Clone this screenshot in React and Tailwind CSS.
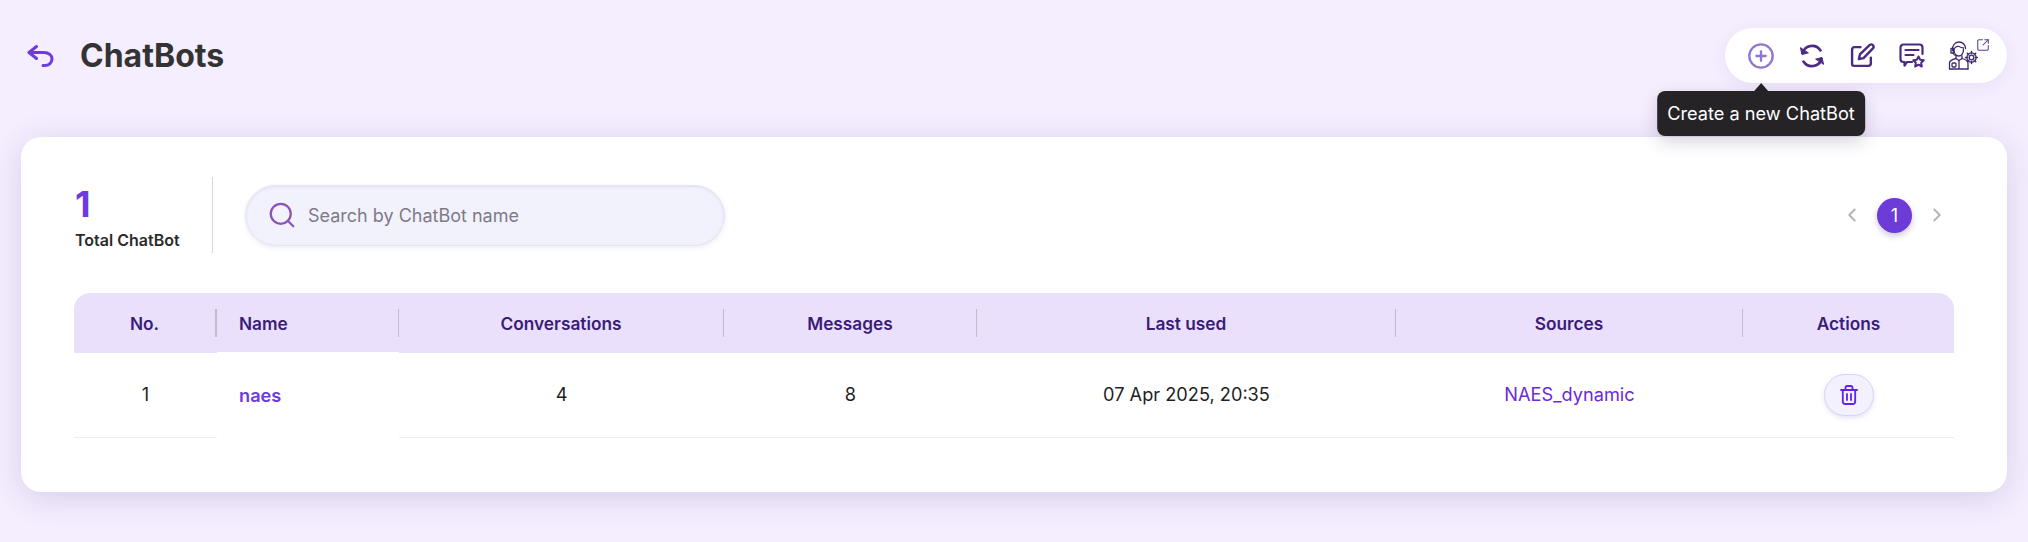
import React from 'react';
import { ChevronLeft, ChevronRight, CirclePlus, Search, SquareArrowOutUpRight } from 'lucide-react';

const columns = [
    { label: 'No.', width: 'w-[143px]' },
    { label: 'Name', width: 'w-[182px]', left: true },
    { label: 'Conversations', width: 'w-[325px]' },
    { label: 'Messages', width: 'w-[253px]' },
    { label: 'Last used', width: 'w-[419px]' },
    { label: 'Sources', width: 'w-[347px]' },
    { label: 'Actions', width: 'w-[211px]', last: true },
];

const BackIcon = () => (
    <svg width="28" height="24" viewBox="0 0 28 24" fill="none" stroke="#6d3be0" strokeWidth="3" strokeLinecap="round" strokeLinejoin="round">
        <path d="M9.500 2.500 2 8.500l7.500 6" />
        <path d="M2.500 8.500h14.500a8 6.200 0 0 1 8 6.500 7 6.500 0 0 1-7.500 6.500h-1.500" />
    </svg>
);

const RefreshIcon = () => (
    <svg width="26" height="24" viewBox="0 0 26 24" fill="none" stroke="#4b2a85" strokeWidth="2.600" strokeLinecap="round">
        <path d="M3.500 9a10 10 0 0 1 18-2.500" />
        <path d="M22.500 15a10 10 0 0 1-18 2.500" />
        <path d="M1.500 4 3 10.500l6-1.500z" fill="#4b2a85" strokeWidth="1" strokeLinejoin="round" />
        <path d="M24.500 20 23 13.500l-6 1.500z" fill="#4b2a85" strokeWidth="1" strokeLinejoin="round" />
    </svg>
);

const EditIcon = () => (
    <svg width="25" height="25" viewBox="0 0 24 24" fill="none" stroke="#4b2a85" strokeWidth="2.300" strokeLinecap="round" strokeLinejoin="round">
        <path d="M10 4H4.500A2.500 2.500 0 0 0 2 6.500V20a2 2 0 0 0 2 2h13.500a2.500 2.500 0 0 0 2.500-2.500V14" />
        <path d="M8.500 15.500l1-4.500L19 1.800a2.300 2.300 0 0 1 3.200 3.200L13 14.500z" />
    </svg>
);

const FeedbackIcon = () => (
    <svg width="26" height="26" viewBox="0 0 26 26" fill="none" stroke="#4b2a85" strokeWidth="2.200" strokeLinecap="round" strokeLinejoin="round">
        <path d="M13 19H8l-2.500 3.500V19H4.500A3 3 0 0 1 1.500 16V4.500a3 3 0 0 1 3-3h16a3 3 0 0 1 3 3V11" />
        <path d="M6.500 7h13M6.500 12h8" />
        <path d="m19.500 13.500 1.700 3.300 3.500.5-2.500 2.500.6 3.700-3.300-1.800-3.300 1.800.6-3.700-2.500-2.500 3.500-.5z" strokeWidth="2" />
    </svg>
);

const AgentIcon = () => (
    <svg width="30" height="29" viewBox="0 0 30 29" fill="none" stroke="#3f2a6e" strokeWidth="1.300" strokeLinecap="round" strokeLinejoin="round">
        <path d="M4.500 9.500C4 4.500 7 1 11 1s6.500 3 6.500 6.500" />
        <path d="M6 8c1.500-2.500 3.500-3 5-2.500 1.500.8 3 1.500 4.500 1.300" />
        <path d="M6 8.500c0 4 2.200 6.500 4.800 6.500 2.800 0 4.800-2.800 4.700-7" />
        <path d="M3 7.500h2.500v4.500H3zM5 12.500c1 1.500 2.500 2 4 2" />
        <path d="M8 15v2.500l3 2 3-2V15" />
        <path d="M1.500 28v-6c0-2.500 2.500-3.500 6.500-4.500M20 28v-6c0-2.500-2.500-3.500-6-4.500" />
        <path d="M1.500 28H20M11 20v8" />
        <rect x="4" y="22" width="4" height="4" rx="1" />
        <circle cx="23.500" cy="16.500" r="2.300" />
        <path d="M23.500 10.500v2M23.500 20.500v2M17.500 16.500h2M27.500 16.500h2M19.300 12.300l1.400 1.400M26.300 19.300l1.400 1.400M19.300 20.700l1.400-1.400M26.300 13.700l1.400-1.400" strokeWidth="1.500" />
        <circle cx="23.500" cy="16.500" r="4.600" />
    </svg>
);

const TrashIcon = () => (
    <svg width="18" height="20" viewBox="0 0 18 20" fill="none" stroke="#6223e8" strokeWidth="1.800" strokeLinecap="round" strokeLinejoin="round">
        <path d="M1 5h16" />
        <path d="M5.500 5V2.800A1.800 1.800 0 0 1 7.300 1h3.400a1.800 1.800 0 0 1 1.800 1.800V5" />
        <path d="M2.800 5v11.500A2.500 2.500 0 0 0 5.300 19h7.400a2.500 2.500 0 0 0 2.500-2.500V5" />
        <path d="M7 9v6M11 9v6" />
    </svg>
);

export default function App() {
    return (
        <div className="min-h-screen bg-[#f5eefe] pt-[28px] font-['Inter',sans-serif] text-[#1f1f1f]">
            <div className="flex items-center justify-between pl-[27px] pr-[21px]">
                <div className="flex items-center gap-[25px]">
                    <BackIcon />
                    <h1 className="text-[32px] font-bold leading-[55px] text-[#333333]">ChatBots</h1>
                </div>
                <div className="flex h-[55px] w-[282px] items-center rounded-full bg-white pl-[22px] shadow-[0_4px_16px_rgba(90,50,160,0.08)]">
                    <div className="relative mr-[24px] flex">
                        <CirclePlus size={28} strokeWidth={2} className="text-[#9277d0]" />
                        <div className="absolute left-1/2 top-[41px] z-10 -translate-x-1/2">
                            <div className="mx-auto h-0 w-0 border-x-[7px] border-b-[8px] border-x-transparent border-b-[#252326]" />
                            <div className="whitespace-nowrap rounded-lg bg-[#252326] px-[10px] py-[11px] text-[18.2px] leading-[23px] text-white shadow-[0_6px_18px_rgba(40,20,80,0.18)]">
                                Create a new ChatBot
                            </div>
                        </div>
                    </div>
                    <div className="mr-[25px] flex"><RefreshIcon /></div>
                    <div className="mr-[24px] flex"><EditIcon /></div>
                    <div className="mr-[23px] flex"><FeedbackIcon /></div>
                    <div className="flex items-start">
                        <AgentIcon />
                        <SquareArrowOutUpRight size={14} strokeWidth={1.800} className="-ml-[2px] -mt-[3px] text-[#5a3a92]" />
                    </div>
                </div>
            </div>

            <div className="mx-[21px] mt-[54px] rounded-[20px] bg-white pb-[54px] pl-[53px] pr-[53px] pt-[40px] shadow-[0_6px_32px_rgba(70,40,130,0.16)]">
                <div className="mb-[40px] flex h-[76px] items-center">
                    <div className="flex h-full w-[139px] flex-col border-r border-[#d6d6dc] pl-[1px]">
                        <span className="mt-[5px] text-[36px] font-bold leading-[44px] text-[#6d3be0]">1</span>
                        <span className="mt-[4px] text-[16px] font-semibold leading-[20px] text-[#2b2b2b]">Total ChatBot</span>
                    </div>
                    <div className="ml-[32px] flex h-[61px] w-[480px] items-center rounded-full border border-[#e6e4f2] bg-[#f2f2fd] pl-[21px] shadow-[inset_0_1px_3px_rgba(90,70,150,0.1),0_2px_5px_rgba(90,70,150,0.1)]">
                        <Search size={30} strokeWidth={1.800} className="text-[#8b55b8]" />
                        <span className="ml-[11px] text-[18px] text-[#7e7a88]">Search by ChatBot name</span>
                    </div>
                    <div className="ml-auto mr-[6px] flex items-center gap-[14px]">
                        <ChevronLeft size={22} strokeWidth={2} className="text-[#b3b3b3]" />
                        <span className="flex h-[35px] w-[35px] items-center justify-center rounded-full bg-[#6d3bd8] text-[18px] text-white shadow-[0_3px_6px_rgba(60,30,120,0.25)]">1</span>
                        <ChevronRight size={22} strokeWidth={2} className="text-[#b3b3b3]" />
                    </div>
                </div>

                <div className="flex h-[60px] overflow-hidden rounded-t-[16px] bg-[#eae0fc]">
                    {columns.map((col) => (
                        <div key={col.label} className={`flex items-center ${col.width}`}>
                            <span className={`flex-1 pt-[1px] text-[17.3px] font-semibold text-[#3a1c78] ${col.left ? 'pl-[22px] text-left' : 'text-center'}`}>
                                {col.label}
                            </span>
                            {!col.last && <span className={`h-[28px] bg-[#c4bdd1] ${col.label === 'No.' ? 'w-[2px]' : 'w-px'}`} />}
                        </div>
                    ))}
                </div>
                <div className="flex h-[85px] items-center border-b border-[#eeedf1] text-[18.2px] text-[#1f1f1f]">
                    <div className="w-[143px] text-center">1</div>
                    <div className="-mt-[1px] flex h-[87px] w-[182px] items-center self-start bg-white pl-[22px] pt-[1px] font-semibold text-[#6d3be0]">naes</div>
                    <div className="w-[325px] text-center">4</div>
                    <div className="w-[253px] text-center">8</div>
                    <div className="w-[419px] text-center">07 Apr 2025, 20:35</div>
                    <div className="w-[347px] text-center text-[#6d28d9]">NAES_dynamic</div>
                    <div className="flex w-[211px] justify-center pb-[1px]">
                        <button className="flex h-[42px] w-[50px] items-center justify-center rounded-full border border-[#dcd0f9] bg-[#f2f1fd] shadow-[0_2px_5px_rgba(90,60,170,0.15)]">
                            <TrashIcon />
                        </button>
                    </div>
                </div>
            </div>
        </div>
    );
}
